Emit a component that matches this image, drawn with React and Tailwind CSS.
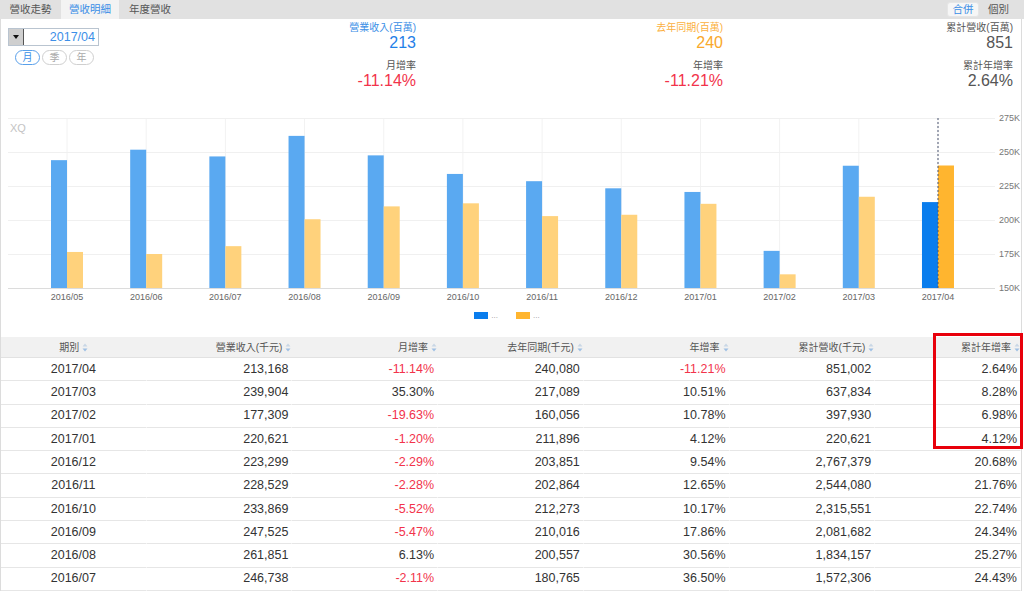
const months = ["2016/05", "2016/06", "2016/07", "2016/08", "2016/09", "2016/10", "2016/11", "2016/12", "2017/01", "2017/02", "2017/03", "2017/04"];
const revenue = [244.0, 251.7, 246.738, 261.851, 247.525, 233.869, 228.529, 223.299, 220.621, 177.309, 239.904, 213.168];
const lastYear = [176.5, 175.0, 180.765, 200.557, 210.016, 212.273, 202.864, 203.851, 211.896, 160.056, 217.089, 240.08];

const rows = [
  ["2017/04", "213,168", "-11.14%", "240,080", "-11.21%", "851,002", "2.64%"],
  ["2017/03", "239,904", "35.30%", "217,089", "10.51%", "637,834", "8.28%"],
  ["2017/02", "177,309", "-19.63%", "160,056", "10.78%", "397,930", "6.98%"],
  ["2017/01", "220,621", "-1.20%", "211,896", "4.12%", "220,621", "4.12%"],
  ["2016/12", "223,299", "-2.29%", "203,851", "9.54%", "2,767,379", "20.68%"],
  ["2016/11", "228,529", "-2.28%", "202,864", "12.65%", "2,544,080", "21.76%"],
  ["2016/10", "233,869", "-5.52%", "212,273", "10.17%", "2,315,551", "22.74%"],
  ["2016/09", "247,525", "-5.47%", "210,016", "17.86%", "2,081,682", "24.34%"],
  ["2016/08", "261,851", "6.13%", "200,557", "30.56%", "1,834,157", "25.27%"],
  ["2016/07", "246,738", "-2.11%", "180,765", "36.50%", "1,572,306", "24.43%"],
];

const headers = ["期別", "營業收入(千元)", "月增率", "去年同期(千元)", "年增率", "累計營收(千元)", "累計年增率"];

// value in K -> y in page coords
const yOf = (v) => 288 - (v - 150) * 1.36;
const xOf = (i) => 67 + i * 79.18;

function SortIcon() {
  return (
    <svg width="6" height="9" viewBox="0 0 6 9" className="ml-[3px] inline-block align-middle">
      <path d="M3 0.5 L5.5 3.5 L0.5 3.5 Z" fill="#c9d7e6" />
      <path d="M3 8.5 L5.5 5.5 L0.5 5.5 Z" fill="#9fc0e4" />
    </svg>
  );
}

function Stat({ label, value, labelColor, valueColor, label2, value2, value2Color }) {
  return (
    <div className="text-right">
      <div className={`text-[10px] leading-[13px] ${labelColor}`}>{label}</div>
      <div className={`text-[16px] leading-[18px] ${valueColor}`}>{value}</div>
      <div className="mt-[7px] text-[10px] leading-[13px] text-[#555]">{label2}</div>
      <div className={`text-[16px] leading-[18px] ${value2Color}`}>{value2}</div>
    </div>
  );
}

function Chart() {
  const grid = [288, 254, 220, 186, 152, 118];
  const labels = ["150K", "175K", "200K", "225K", "250K", "275K"];
  return (
    <svg width="1020" height="205" viewBox="1 100 1020 205" className="block">
      <text x="10" y="132" fontSize="11" fill="#c4c4c4">XQ</text>
      {months.map((m, i) => (
        <line key={m} x1={xOf(i)} x2={xOf(i)} y1="118" y2="288" stroke="#f2f2f2" strokeWidth="1" />
      ))}
      {grid.map((y, i) => (
        <g key={y}>
          <line x1="8" x2="995" y1={y + 0.5} y2={y + 0.5} stroke={i === 0 ? "#dcdcdc" : "#f0f0f0"} strokeWidth="1" />
          <text x="999" y={y + 3} fontSize="9" fill="#777">{labels[i]}</text>
        </g>
      ))}
      {months.map((m, i) => {
        const last = i === months.length - 1;
        const cx = xOf(i);
        return (
          <g key={m}>
            <rect x={cx - 16} y={yOf(revenue[i])} width="16" height={288 - yOf(revenue[i])} fill={last ? "#0a7ded" : "#5aa9f1"} />
            <rect x={cx} y={yOf(lastYear[i])} width="16" height={288 - yOf(lastYear[i])} fill={last ? "#ffb52f" : "#ffd27c"} />
            <text x={cx} y="300" fontSize="9" fill="#666" textAnchor="middle">{m}</text>
          </g>
        );
      })}
      <line x1="938" x2="938" y1="118" y2="288" stroke="#4a5470" strokeWidth="1" strokeDasharray="2 2" />
    </svg>
  );
}

export default function App() {
  return (
    <div className="h-[591px] w-[1024px] overflow-hidden bg-white font-['Liberation_Sans','Noto_Sans_CJK_TC',sans-serif] text-[#333]">
      {/* Tabs */}
      <div className="flex h-[19px] items-stretch bg-[#e1e1e1] text-[10.5px]">
        <div className="flex w-[61px] items-center justify-center text-[#555]">營收走勢</div>
        <div className="flex w-[58px] items-center justify-center bg-[#f3f3f3] text-[#3a8ee6]">營收明細</div>
        <div className="flex w-[62px] items-center justify-center text-[#555]">年度營收</div>
        <div className="ml-auto flex items-center gap-[9px] pr-[15px]">
          <div className="flex h-[15px] w-[32px] items-center justify-center rounded-[3px] border border-[#e6e6e6] bg-[#f6f6f6] text-[#3a8ee6]">合併</div>
          <div className="text-[#555]">個別</div>
        </div>
      </div>

      <div className="w-[1022px] border-x border-[#dcdcdc]">
        {/* Header */}
        <div className="flex h-[81px] pt-[2px]">
          <div className="w-[109px] pl-[7px] pt-[7px]">
            <div className="flex h-[18px] w-[91px] border border-[#b9c4d0]">
              <div className="flex w-[15px] items-center justify-center border-r border-[#555] bg-[#cfcfcf]">
                <svg width="6" height="4" viewBox="0 0 6 4"><path d="M0 0 L6 0 L3 4 Z" fill="#111" /></svg>
              </div>
              <div className="flex flex-1 items-center justify-end pr-[3px] text-[12.5px] text-[#3d8fe8]">2017/04</div>
            </div>
            <div className="mt-[4px] flex gap-[2px] pl-[7px] text-[10px]">
              <div className="flex h-[15px] w-[25px] items-center justify-center rounded-full border border-[#5aa0ea] text-[#3a8ee6]">月</div>
              <div className="flex h-[15px] w-[25px] items-center justify-center rounded-full border border-[#cfcfcf] text-[#aaa]">季</div>
              <div className="flex h-[15px] w-[25px] items-center justify-center rounded-full border border-[#cfcfcf] text-[#aaa]">年</div>
            </div>
          </div>
          <div className="w-[306px]">
            <Stat label="營業收入(百萬)" value="213" labelColor="text-[#3a8ee6]" valueColor="text-[#1f80e8]" label2="月增率" value2="-11.14%" value2Color="text-[#f2334b]" />
          </div>
          <div className="w-[307px]">
            <Stat label="去年同期(百萬)" value="240" labelColor="text-[#fbb040]" valueColor="text-[#f9a82a]" label2="年增率" value2="-11.21%" value2Color="text-[#f2334b]" />
          </div>
          <div className="w-[290px]">
            <Stat label="累計營收(百萬)" value="851" labelColor="text-[#555]" valueColor="text-[#555]" label2="累計年增率" value2="2.64%" value2Color="text-[#555]" />
          </div>
        </div>

        {/* Chart */}
        <Chart />

        {/* Legend */}
        <div className="flex h-[32px] w-[1012px] justify-center gap-[18px] pt-[7px] text-[8px] leading-[8px] text-[#999]">
          <div className="flex items-start gap-[3px]">
            <div className="h-[7px] w-[14px] bg-[#0a7ded]" />
            <span>...</span>
          </div>
          <div className="flex items-start gap-[3px]">
            <div className="h-[7px] w-[14px] bg-[#ffb52f]" />
            <span>...</span>
          </div>
        </div>

        {/* Table */}
        <div className="relative">
          <table className="w-full table-fixed border-separate border-spacing-0">
            <thead>
              <tr className="h-[21px] bg-[#f1f1f1] text-[10px] text-[#555]">
                {headers.map((h, i) => (
                  <th key={h} className={`border-b border-[#e2e2e2] font-normal ${i === 0 ? "text-center" : "pr-[1px] text-right"}`}>
                    {h}
                    <SortIcon />
                  </th>
                ))}
              </tr>
            </thead>
            <tbody>
              {rows.map((r) => (
                <tr key={r[0]} className="h-[23.3px] text-[12.5px]">
                  {r.map((c, i) => (
                    <td
                      key={i}
                      className={`border-b border-r border-b-[#e6e6e6] border-r-white ${i === 0 ? "text-center" : "pr-[3px] text-right"} ${c.startsWith("-") ? "text-[#f2334b]" : "text-[#333]"}`}
                    >
                      {c}
                    </td>
                  ))}
                </tr>
              ))}
            </tbody>
          </table>
          <div className="absolute left-[932px] top-[-4px] h-[116px] w-[90px] border-[3px] border-[#e8000b]" />
        </div>
      </div>
    </div>
  );
}
